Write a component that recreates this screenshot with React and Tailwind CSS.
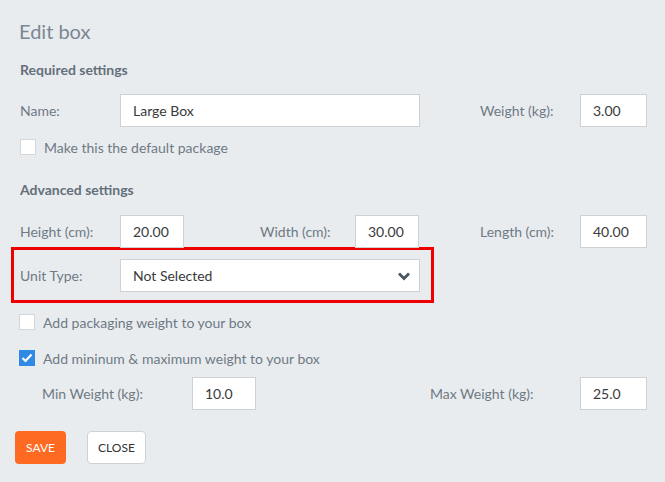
import React from 'react';

const font = { fontFamily: 'Lato, "Open Sans", sans-serif' };

function Field({ value, w }) {
  return (
    <div
      className={`h-[33px] ${w} bg-white border border-[#cfd2d4] flex items-center pl-[12px] text-[14px] text-[#3a3a3a]`}
    >
      {value}
    </div>
  );
}

function Check({ checked, label, className = '' }) {
  return (
    <div className={`flex items-center h-[16px] ${className}`}>
      {checked ? (
        <span className="w-[16px] h-[16px] bg-[#2f8ae6] flex items-center justify-center">
          <svg width="12" height="10" viewBox="0 0 12 10">
            <polyline points="1.5,5 4.5,8 10.5,1.5" fill="none" stroke="white" strokeWidth="2.2" />
          </svg>
        </span>
      ) : (
        <span className="w-[16px] h-[16px] bg-white border border-[#d4d7d9]" />
      )}
      <span className="ml-[8px] text-[14px] text-[#6e7a85]">{label}</span>
    </div>
  );
}

export default function App() {
  return (
    <div className="w-[665px] h-[482px] bg-[#e9ecef] pl-[20px] pt-[19px] overflow-hidden" style={font}>
      <h1 className="text-[20px] leading-[24px] text-[#7b8792] ml-[-1px]">Edit box</h1>

      <h2 className="mt-[17px] text-[14px] leading-[20px] font-bold text-[#646f7a]">Required settings</h2>

      <div className="mt-[14px] flex items-center">
        <span className="w-[100px] text-[14px] text-[#6e7a85]">Name:</span>
        <Field value="Large Box" w="w-[300px]" />
        <span className="ml-[60px] w-[100px] text-[14px] text-[#6e7a85]">Weight (kg):</span>
        <Field value="3.00" w="w-[67px]" />
      </div>

      <Check label="Make this the default package" className="mt-[12px]" />

      <h2 className="mt-[25px] text-[14px] leading-[20px] font-bold text-[#646f7a]">Advanced settings</h2>

      <div className="mt-[15px] flex items-center">
        <span className="w-[100px] text-[14px] text-[#6e7a85]">Height (cm):</span>
        <Field value="20.00" w="w-[64px]" />
        <span className="ml-[76px] w-[95px] text-[14px] text-[#6e7a85]">Width (cm):</span>
        <Field value="30.00" w="w-[64px]" />
        <span className="ml-[61px] w-[100px] text-[14px] text-[#6e7a85]">Length (cm):</span>
        <Field value="40.00" w="w-[67px]" />
      </div>

      <div className="ml-[-9px] mt-[-1px] w-[423px] border-[3px] border-[#ee0000] pt-[9px] pb-[8px] pl-[6px] pr-[11px] flex items-center">
        <span className="w-[100px] text-[14px] text-[#6e7a85]">Unit Type:</span>
        <div className="h-[33px] w-[300px] bg-white border border-[#cfd2d4] flex items-center justify-between pl-[12px] pr-[8px] text-[14px] text-[#3a3a3a]">
          <span>Not Selected</span>
          <svg width="14" height="10" viewBox="0 0 14 10">
            <polyline points="2,2.5 7,7.5 12,2.5" fill="none" stroke="#4a5560" strokeWidth="2.8" />
          </svg>
        </div>
      </div>

      <Check label="Add packaging weight to your box" className="mt-[11px] ml-[-1px]" />
      <Check checked label="Add mininum & maximum weight to your box" className="mt-[20px] ml-[-1px]" />

      <div className="mt-[11px] flex items-center">
        <span className="ml-[22px] w-[150px] text-[14px] text-[#6e7a85]">Min Weight (kg):</span>
        <Field value="10.0" w="w-[64px]" />
        <span className="ml-[174px] w-[150px] text-[14px] text-[#6e7a85]">Max Weight (kg):</span>
        <Field value="25.0" w="w-[67px]" />
      </div>

      <div className="mt-[21px] ml-[-5px] flex gap-[21px]">
        <button className="h-[33px] w-[51px] bg-[#ff6a22] rounded-[4px] text-white text-[12px]">SAVE</button>
        <button className="h-[33px] w-[59px] bg-white border border-[#cfd2d4] rounded-[4px] text-[#333] text-[12px]">CLOSE</button>
      </div>
    </div>
  );
}
